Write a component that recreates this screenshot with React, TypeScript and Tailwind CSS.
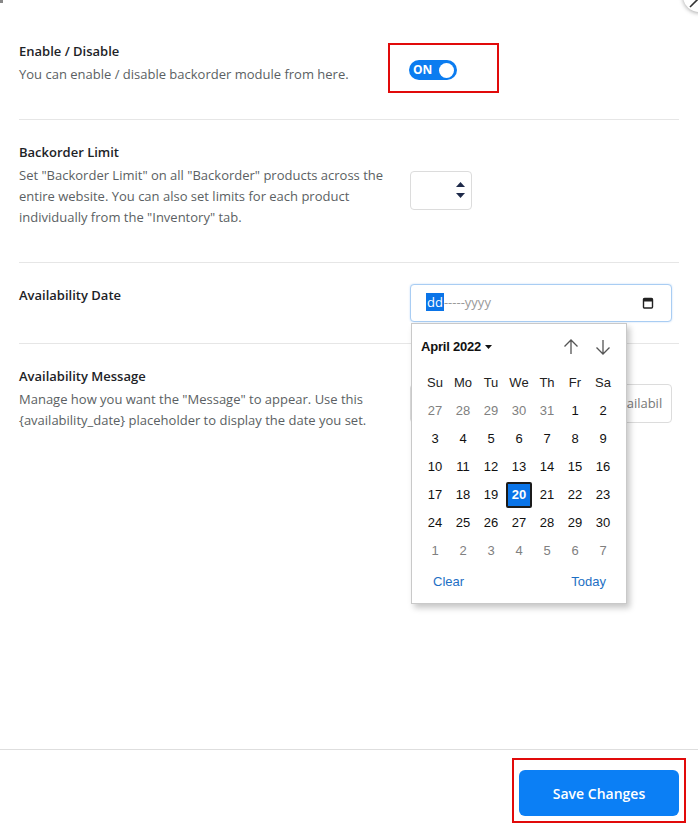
import React from "react";

const font = { fontFamily: '"Open Sans", "Noto Sans", Arial, sans-serif' };

function Row({
  title,
  desc,
  children,
  last,
}: {
  title: string;
  desc?: React.ReactNode;
  children: React.ReactNode;
  last?: boolean;
}) {
  return (
    <div className={`flex items-center pt-[22px] pb-[24px] ${last ? "" : "border-b border-[#e6e6e6]"}`}>
      <div className="w-[391px] shrink-0 pb-[10px]">
        <p className="text-[13px] leading-[20px] font-semibold text-[#1d2327]">{title}</p>
        {desc && <p className="mt-[3px] text-[13px] leading-[21px] text-[#5b5f63] pr-[20px]">{desc}</p>}
      </div>
      <div className="flex-1">{children}</div>
    </div>
  );
}

function Toggle() {
  return (
    <div className="-ml-[22px] inline-block border-2 border-[#e10a0a] pl-[19px] pr-[40px] pt-[15px] pb-[11px]">
      <div className="flex h-[20px] w-[48px] items-center justify-between rounded-full bg-[#0b7cf0] pl-[4px] pr-[3px]">
        <span className="text-[12px] font-bold leading-none text-white">ON</span>
        <span className="h-[15px] w-[15px] rounded-full bg-white" />
      </div>
    </div>
  );
}

function NumberBox() {
  return (
    <div className="flex h-[39px] w-[62px] items-center justify-end rounded-[4px] border border-[#dcdcdc] bg-white pr-[5px]">
      <svg width="11" height="22" viewBox="0 0 11 22">
        <path d="M1 8 L5.5 3 L10 8 Z" fill="#1e2a4a" />
        <path d="M1 14 L5.5 19 L10 14 Z" fill="#1e2a4a" />
      </svg>
    </div>
  );
}

function CalIcon() {
  return (
    <svg width="12" height="12" viewBox="0 0 12 12">
      <rect x="1.5" y="1.5" width="9" height="9.5" rx="1" fill="none" stroke="#222" strokeWidth="1.4" />
      <rect x="1.5" y="1.5" width="9" height="3" fill="#222" />
    </svg>
  );
}

const weeks = [
  [27, 28, 29, 30, 31, 1, 2],
  [3, 4, 5, 6, 7, 8, 9],
  [10, 11, 12, 13, 14, 15, 16],
  [17, 18, 19, 20, 21, 22, 23],
  [24, 25, 26, 27, 28, 29, 30],
  [1, 2, 3, 4, 5, 6, 7],
];

function Calendar() {
  return (
    <div
      className="absolute left-[1px] top-[39px] z-10 w-[216px] border border-[#c9c9c9] bg-white px-[9px] pt-[11px] pb-[9px] shadow-[3px_4px_6px_rgba(0,0,0,0.22)]"
      style={{ fontFamily: '"Liberation Sans", Arial, sans-serif' }}
    >
      <div className="flex h-[24px] items-center justify-between">
        <div className="flex items-center gap-[4px] text-[13px] font-bold tracking-[-0.2px] text-[#111]">
          April 2022
          <svg width="7" height="4" viewBox="0 0 7 4">
            <path d="M0 0 L7 0 L3.5 4 Z" fill="#111" />
          </svg>
        </div>
        <div className="flex items-center gap-[14px] pr-[5px]">
          <svg width="18" height="18" viewBox="0 0 18 18">
            <path d="M9 16 V2 M2.5 8.5 L9 2 L15.5 8.5" fill="none" stroke="#555" strokeWidth="1.3" />
          </svg>
          <svg width="18" height="18" viewBox="0 0 18 18">
            <path d="M9 2 V16 M2.5 9.5 L9 16 L15.5 9.5" fill="none" stroke="#555" strokeWidth="1.3" />
          </svg>
        </div>
      </div>
      <div className="mt-[10px] grid grid-cols-7 text-[13px] leading-[16px]">
        {["Su", "Mo", "Tu", "We", "Th", "Fr", "Sa"].map((d) => (
          <div key={d} className="flex h-[28px] items-center justify-center text-[#222]">
            {d}
          </div>
        ))}
        {weeks.map((w, wi) =>
          w.map((d, di) => {
            const other = (wi === 0 && d > 20) || wi === 5;
            const selected = wi === 3 && d === 20;
            return (
              <div key={`${wi}-${di}`} className="flex h-[28px] items-center justify-center">
                {selected ? (
                  <span className="flex h-[26px] w-[26px] items-center justify-center rounded-[2px] border-2 border-[#1b1b1b] bg-[#0a74e8] font-bold text-white">
                    {d}
                  </span>
                ) : (
                  <span className={other ? "text-[#808080]" : "text-[#111]"}>{d}</span>
                )}
              </div>
            );
          })
        )}
      </div>
      <div className="mt-[5px] flex h-[24px] items-center justify-between pl-[12px] pr-[11px] text-[13px] leading-[16px] text-[#1d6fc4]">
        <span>Clear</span>
        <span>Today</span>
      </div>
    </div>
  );
}

function DateBox() {
  return (
    <div className="relative w-[262px]">
      <div className="flex h-[38px] items-center justify-between rounded-[4px] border border-[#a9cdf3] bg-white pl-[15px] pr-[17px] text-[13px] shadow-[0_0_2px_rgba(10,116,232,0.25)]">
        <span>
          <span className="bg-[#0a74e8] px-[1px] text-white">dd</span>
          <span className="text-[#9a9a9a]">-----yyyy</span>
        </span>
        <CalIcon />
      </div>
      <Calendar />
    </div>
  );
}

function MessageBox() {
  return (
    <div className="flex h-[39px] w-[262px] items-center rounded-[4px] border border-[#dcdcdc] bg-white pl-[7px]">
      <div className="w-[244px] overflow-hidden whitespace-nowrap text-[13px] text-[#777]">
        This product will be in stock on {"{availability_date}"}
      </div>
    </div>
  );
}

export default function App() {
  return (
    <div className="relative flex h-[835px] w-[698px] flex-col overflow-hidden bg-white" style={font}>
      <div className="absolute left-0 top-0 h-[3px] w-[3px] bg-[#888]" />
      <div className="absolute left-[683px] top-[-20px] flex h-[32px] w-[32px] items-center justify-center rounded-full bg-white shadow-[0_1px_4px_rgba(0,0,0,0.35)]">
        <svg width="12" height="12" viewBox="0 0 12 12" className="mt-[14px] -ml-[10px]">
          <path d="M2 10 L10 2" stroke="#333" strokeWidth="1.6" />
        </svg>
      </div>
      <div className="flex-1 px-[19px]">
        <div className="flex items-center border-b border-[#e6e6e6] pt-[41px] pb-[24px]">
          <div className="w-[391px] shrink-0 pb-[10px]">
            <p className="text-[13px] leading-[20px] font-semibold text-[#1d2327]">Enable / Disable</p>
            <p className="mt-[3px] text-[13px] leading-[21px] text-[#5b5f63]">
              You can enable / disable backorder module from here.
            </p>
          </div>
          <div className="flex-1">
            <Toggle />
          </div>
        </div>
        <Row
          title="Backorder Limit"
          desc={
            <>
              Set "Backorder Limit" on all "Backorder" products across the entire website. You can also set limits for
              each product individually from the "Inventory" tab.
            </>
          }
        >
          <NumberBox />
        </Row>
        <div className="flex items-start border-b border-[#e6e6e6] pt-[21px] pb-[21px]">
          <div className="w-[391px] shrink-0 pt-[1px]">
            <p className="text-[13px] leading-[20px] font-semibold text-[#1d2327]">Availability Date</p>
          </div>
          <div className="flex-1">
            <DateBox />
          </div>
        </div>
        <Row
          title="Availability Message"
          desc={
            <>
              Manage how you want the "Message" to appear. Use this {"{availability_date}"} placeholder to display the
              date you set.
            </>
          }
          last
        >
          <MessageBox />
        </Row>
      </div>
      <div className="flex justify-end border-t border-[#dedede] pt-[8px] pr-[12px] pb-[12px]">
        <div className="border-2 border-[#e10a0a] px-[5px] pt-[10px] pb-[5px]">
          <button className="h-[46px] w-[160px] rounded-[6px] bg-[#0b7ff5] text-[14px] font-semibold text-white">
            Save Changes
          </button>
        </div>
      </div>
    </div>
  );
}
